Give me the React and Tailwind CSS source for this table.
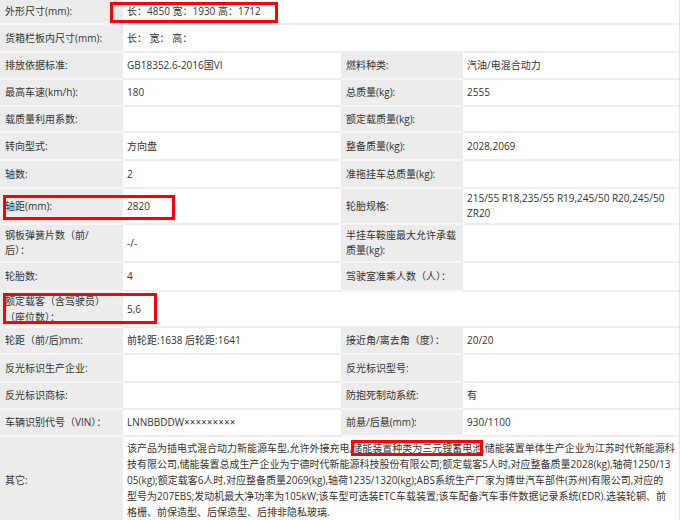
const L = ({ children, className = "" }) => (
  <div className={`relative flex items-center bg-[#ececec] border-b-2 border-[#f7f7f7] pl-[5px] pr-1 ${className}`}>
    {children}
  </div>
);

const V = ({ children, className = "" }) => (
  <div className={`relative flex items-center bg-white border-b-2 border-[#eeeeee] pl-[4px] pr-1 ${className}`}>
    {children}
  </div>
);

const Box = ({ className = "" }) => (
  <div className={`absolute border-[3px] border-[#ff0000] pointer-events-none z-10 ${className}`} />
);

export default function App() {
  return (
    <div
      className="w-[680px] h-[520px] overflow-hidden bg-white text-[10px] leading-[15px] text-[#333]"
      style={{ fontFamily: '"Open Sans", "Noto Sans CJK SC", sans-serif' }}
    >
      <div className="grid grid-cols-[123px_218px_122px_216px] grid-rows-[25px_28px_27px_27px_26px_28px_28px_36px_38px_29px_36px_27px_28px_27px_27px_auto] border-r border-[#e4e4e4]">
        {/* 1 */}
        <L>外形尺寸(mm):</L>
        <V className="col-span-3">
          长：4850 宽：1930 高：1712
          <Box className="-left-[13px] top-[2px] w-[168px] h-[21px]" />
        </V>

        {/* 2 */}
        <L>货箱栏板内尺寸(mm):</L>
        <V className="col-span-3">长：&nbsp;宽：&nbsp;高：</V>

        {/* 3 */}
        <L>排放依据标准:</L>
        <V>GB18352.6-2016国VI</V>
        <L className="pl-[3px]">燃料种类:</L>
        <V className="pl-[3px]">汽油/电混合动力</V>

        {/* 4 */}
        <L>最高车速(km/h):</L>
        <V>180</V>
        <L className="pl-[3px]">总质量(kg):</L>
        <V className="pl-[3px]">2555</V>

        {/* 5 */}
        <L>载质量利用系数:</L>
        <V />
        <L className="pl-[3px]">额定载质量(kg):</L>
        <V />

        {/* 6 */}
        <L>转向型式:</L>
        <V>方向盘</V>
        <L className="pl-[3px]">整备质量(kg):</L>
        <V className="pl-[3px]">2028,2069</V>

        {/* 7 */}
        <L>轴数:</L>
        <V>2</V>
        <L className="pl-[3px]">准拖挂车总质量(kg):</L>
        <V />

        {/* 8 */}
        <L>
          轴距(mm):
          <Box className="left-[3px] top-[6px] w-[172px] h-[25px]" />
        </L>
        <V>2820</V>
        <L className="pl-[3px]">轮胎规格:</L>
        <V className="pl-[3px]">
          <span>
            215/55 R18,235/55 R19,245/50 R20,245/50
            <br />
            ZR20
          </span>
        </V>

        {/* 9 */}
        <L>
          <span>
            钢板弹簧片数（前/
            <br />
            后）：
          </span>
        </L>
        <V>-/-</V>
        <L className="pl-[3px]">
          <span>
            半挂车鞍座最大允许承载
            <br />
            质量(kg):
          </span>
        </L>
        <V />

        {/* 10 */}
        <L>轮胎数:</L>
        <V>4</V>
        <L className="pl-[3px]">驾驶室准乘人数（人）：</L>
        <V />

        {/* 11 */}
        <L className="leading-[16px]">
          <span>
            额定载客（含驾驶员）
            <br />
            （座位数）：
          </span>
          <Box className="left-[3px] top-[1px] w-[154px] h-[31px]" />
        </L>
        <V>5,6</V>
        <V className="col-span-2" />

        {/* 12 */}
        <L>轮距（前/后)mm:</L>
        <V>前轮距:1638 后轮距:1641</V>
        <L className="pl-[3px]">接近角/离去角（度）：</L>
        <V className="pl-[3px]">20/20</V>

        {/* 13 */}
        <L>反光标识生产企业:</L>
        <V />
        <L className="pl-[3px]">反光标识型号:</L>
        <V />

        {/* 14 */}
        <L>反光标识商标:</L>
        <V />
        <L className="pl-[3px]">防抱死制动系统:</L>
        <V className="pl-[3px]">有</V>

        {/* 15 */}
        <L>车辆识别代号（VIN）：</L>
        <V>LNNBBDDW×××××××××</V>
        <L className="pl-[3px]">前悬/后悬(mm):</L>
        <V className="pl-[3px]">930/1100</V>

        {/* 16 */}
        <L className="h-[88px]">其它:</L>
        <V className="col-span-3 items-start pt-[3px] leading-[16px] whitespace-nowrap">
          <p>
            该产品为插电式混合动力新能源车型,允许外接充电,
            <span className="outline-3 outline-[#ff0000] outline-offset-[-2px]">储能装置种类为三元锂蓄电池</span>
            ,储能装置单体生产企业为江苏时代新能源科
            <br />
            技有限公司,储能装置总成生产企业为宁德时代新能源科技股份有限公司;额定载客5人时,对应整备质量2028(kg),轴荷1250/13
            <br />
            05(kg);额定载客6人时,对应整备质量2069(kg),轴荷1235/1320(kg);ABS系统生产厂家为博世汽车部件(苏州)有限公司,对应的
            <br />
            型号为207EBS;发动机最大净功率为105kW;该车型可选装ETC车载装置;该车配备汽车事件数据记录系统(EDR).选装轮辋、前
            <br />
            格栅、前保造型、后保造型、后排非隐私玻璃.
          </p>
        </V>
      </div>
    </div>
  );
}
